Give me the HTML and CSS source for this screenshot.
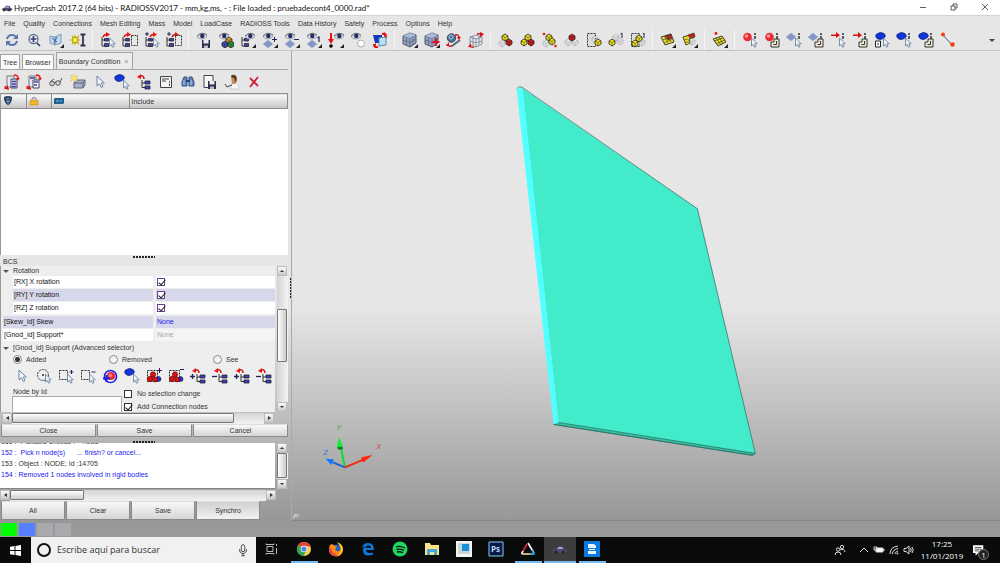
FILE: index.html
```html
<!DOCTYPE html>
<html lang="en">
<head>
<meta charset="UTF-8">
<title>HyperCrash 2017.2</title>
<meta name="viewport" content="width=device-width,initial-scale=1" />
<link rel="stylesheet" href="styles.css">
</head>
<body>

  <!-- shared icon parts -->
  <svg class="defs" width="0" height="0">
    <defs>
      <path id="cursor" d="M9.5 6v8l1.8-1.6 1.2 2.8 1.5-.7-1.2-2.7h2.4z" fill="#eef4fa" stroke="#6f86a3" stroke-width=".9"/>
      <path id="corner" d="M16 12v4h-4z" fill="#222"/>
      <g id="tree">
        <path d="M4 5v9h3M4 8h3" fill="none" stroke="#333"/>
        <path d="M6.500 6.500h4v2.500h-4zM6.500 11.500h4v3h-4z" fill="#4444b0" stroke="#222" stroke-width=".8"/>
      </g>
      <g id="redArrow">
        <path d="M4 5Q5 2 9 2.500" fill="none" stroke="#c11" stroke-width="1.400"/>
        <path d="M7 0l4 2.500-4 2.500z" fill="#e11"/>
      </g>
      <g id="eye">
        <path d="M1 5q5-6 10-1-1 3-5 3-3 0-5-2z" fill="#d9dde4" stroke="#7c8294" stroke-width=".6"/>
        <path d="M1 4q5-5 10-1" fill="none" stroke="#555" stroke-width=".8"/>
        <circle cx="6.300" cy="4" r="2.200" fill="#252c66"/>
      </g>
      <g id="floppy">
        <path d="M6 8h8v8H6z" fill="#2c2c48"/>
        <path d="M7.500 8h5v3.500h-5z" fill="#e8edf5"/>
        <path d="M8 13.500h4V16H8z" fill="#b8bcc8"/>
      </g>
      <path id="dashed" d="M8.500 4.500h6v10h-6z" fill="none" stroke="#333" stroke-dasharray="2 1"/>
      <path id="diamond" d="M5 6l5 4-5 4-5-4z" fill="#8494c4" stroke="#a5b2d4" stroke-width=".6"/>
      <g id="ball"><path d="M0 2l3-2 3 2v3L3 7 0 5z" stroke="#222" stroke-width=".8"/><path d="M0 2l3 1.500L6 2M3 3.500V7" fill="none" stroke="#222" stroke-width=".5"/></g>
      <g id="ghost"><path d="M0 2l3-2 3 2v3L3 7 0 5zM0 2l3 1.500L6 2M3 3.500V7" fill="#e6e6e6" stroke="#aaa" stroke-width=".7"/></g>
      <path id="info" d="M13 1v2M13 4v3" stroke="#222" stroke-width="1.400"/>
      <g id="pageBox">
        <path d="M10 7h5v8H7v-5h3z" fill="#eee8d0" stroke="#333"/>
        <path d="M12.500 9v3.500H9.500" fill="none" stroke="#333"/>
      </g>
      <path id="blueOval" d="M1 3.500Q5 0 9 2.500q2 1.500 1 3.500-4 4-8 1.500-2-1.500-1-4z" fill="#1235d8" stroke="#0a1a80" stroke-width=".7"/>
      <g id="cube">
        <path d="M1 4l7-3 6 2v8l-6 4-7-3z" fill="#8fa3c6" stroke="#556"/>
        <path d="M1 4l7 2 6-3M8 6v9M1 8l7 2.500L14 7M4.500 5v8.500M11 4.500v8.500" fill="none" stroke="#556" stroke-width=".6"/>
        <path d="M1 4l7-3 6 2-6 3z" fill="#a9bbd8"/>
      </g>
      <path id="spin" d="M10 2q4-1 4 4M6 15q-4 1-4-3" fill="none" stroke="#d11" stroke-width="2"/>
    </defs>

    <symbol id="refresh" viewBox="0 0 16 16"><path d="M3 7q1-4 5-4 3 0 4 2M13 9q-1 4-5 4-3 0-4-2" fill="none" stroke="#5577ac" stroke-width="2"/><path d="M14 2v5H9zM2 14V9h5z" fill="#5577ac"/></symbol>
    <symbol id="zoomAll" viewBox="0 0 16 16"><circle cx="7.500" cy="7" r="4.500" fill="#eef" stroke="#667088" stroke-width="1.300"/><path d="M7.500 4v6M4.500 7h6M11 11l3 3" stroke="#34406c" stroke-width="1.700"/></symbol>
    <symbol id="views" viewBox="0 0 16 16"><path d="M2 4l5 1v8l-5-2zM7 5l6-3v9l-6 2z" fill="#b9dcf2" stroke="#7899b8"/><path d="M4 6l5 4M9 5l-3 6" stroke="#558"/><use href="#corner"/></symbol>
    <symbol id="sunBeam" viewBox="0 0 16 16"><path d="M5 3v10M0 8h10M2 4l7 8M9 4l-7 8" stroke="#c6a800" stroke-width="1.200"/><circle cx="5" cy="8" r="2.700" fill="#fff45a" stroke="#b29700"/><path d="M10.500 2.500h5M10.500 13.500h5M13 2v12" stroke="#334" stroke-width="1.800"/></symbol>
    <symbol id="treePick" viewBox="0 0 16 16"><use href="#tree" x="-2"/><use href="#redArrow" x="-1"/><use href="#cursor"/></symbol>
    <symbol id="treeBox" viewBox="0 0 16 16"><use href="#tree" x="-3"/><use href="#redArrow" x="-2"/><use href="#dashed" x="1" y="-1"/></symbol>
    <symbol id="treePickAdd" viewBox="0 0 16 16"><use href="#tree" x="-2"/><use href="#redArrow" x="2"/><use href="#cursor"/><path d="M3 0v4M1 2h4" stroke="#225"/></symbol>
    <symbol id="treeBoxAdd" viewBox="0 0 16 16"><use href="#tree" x="-3"/><use href="#redArrow" x="2"/><use href="#dashed" x="1" y="-1"/><path d="M3 0v4M1 2h4" stroke="#225"/></symbol>
    <symbol id="eyeSave" viewBox="0 0 16 16"><use href="#eye"/><use href="#floppy"/></symbol>
    <symbol id="eyeBalls" viewBox="0 0 16 16"><use href="#eye"/><use href="#ball" x="8" y="5" fill="#e8a020"/><use href="#ball" x="4" y="9" fill="#3554c8"/><use href="#ball" x="10" y="9" fill="#2c9a3c"/></symbol>
    <symbol id="eyeTree" viewBox="0 0 16 16"><use href="#tree" x="-2"/><use href="#eye" x="4"/><use href="#corner"/></symbol>
    <symbol id="eyeAdd" viewBox="0 0 16 16"><use href="#diamond" x="1" y="2"/><use href="#eye"/><path d="M12.500 5v5M10 7.500h5" stroke="#225"/><use href="#corner"/></symbol>
    <symbol id="eyeRemove" viewBox="0 0 16 16"><use href="#diamond" x="1" y="2"/><use href="#eye"/><path d="M10 7.500h5" stroke="#225"/><use href="#corner"/></symbol>
    <symbol id="eyeOne" viewBox="0 0 16 16"><use href="#diamond" x="1" y="2"/><use href="#eye"/><path d="M11.500 6l1.500-1v5" fill="none" stroke="#225" stroke-width="1.200"/><use href="#corner"/></symbol>
    <symbol id="eyeDown" viewBox="0 0 16 16"><path d="M3 1v8" stroke="#e11" stroke-width="2"/><path d="M0 7h6l-3 5z" fill="#e11"/><circle cx="3" cy="14" r="1.800"/><use href="#eye" x="5"/><use href="#corner"/></symbol>
    <symbol id="eyeWhite" viewBox="0 0 16 16"><use href="#eye"/><circle cx="11" cy="11.500" r="3.500" fill="#fff" stroke="#aaa"/></symbol>
    <symbol id="swapView" viewBox="0 0 16 16"><use href="#spin"/><path d="M1 3h9v8H3z" fill="#1238c0"/><path d="M7 6l7-1v8l-7 1z" fill="#b4e0fa" stroke="#689"/><path d="M12 0l3 2.500L12 5zM4 11l-3 3 3 2z" fill="#e11"/></symbol>
    <symbol id="cubeView" viewBox="0 0 16 16"><use href="#cube"/><use href="#corner"/></symbol>
    <symbol id="cubeMove" viewBox="0 0 16 16"><use href="#cube"/><path d="M12 6v8M8.500 10h7" stroke="#d12" stroke-width="1.800"/><use href="#corner"/></symbol>
    <symbol id="sphereTurn" viewBox="0 0 16 16"><circle cx="5.500" cy="6" r="4.200" fill="#4a7396" stroke="#345"/><circle cx="5" cy="5" r="2" fill="none" stroke="#a8c8e0"/><path d="M6 14l8-6" stroke="#567" stroke-width="2"/><path d="M9 3q4-1 4 3M1 12q1 3 5 2" fill="none" stroke="#d11" stroke-width="1.400"/><path d="M11 5h4l-2 3zM3 10v4H0z" fill="#d11"/></symbol>
    <symbol id="wireCube" viewBox="0 0 16 16"><path d="M2 5l6-2 6 2v7l-6 3-6-2zM2 5l6 2 6-2M8 7v8M5 4v10M11 4v9M2 9l6 2 6-2" fill="none" stroke="#70809a" stroke-width=".8"/><path d="M9 2q5-1 5 2M1 14q3 2 5 1" fill="none" stroke="#d11" stroke-width="1.300"/><path d="M12 0l4 2-4 3zM3 11v4H0z" fill="#d11"/></symbol>
    <symbol id="cells1" viewBox="0 0 16 16"><use href="#ghost" x="1" y="8"/><use href="#ball" x="4" y="2" fill="#f4e518"/><use href="#ball" x="8" y="7" fill="#e01818"/></symbol>
    <symbol id="cells2" viewBox="0 0 16 16"><use href="#ball" x="1" y="7" fill="#f4e518"/><use href="#ball" x="5" y="2" fill="#f4e518"/><use href="#ball" x="8" y="7" fill="#e01818"/></symbol>
    <symbol id="cells3" viewBox="0 0 16 16"><use href="#ghost" x="1" y="8"/><use href="#ball" x="4" y="2" fill="#f4e518"/><use href="#ball" x="7" y="6" fill="#f4e518"/><circle cx="2" cy="2" r="1.300" fill="#e11"/><circle cx="13.500" cy="14" r="1.300" fill="#e11"/></symbol>
    <symbol id="cells4" viewBox="0 0 16 16"><use href="#ghost" x="1" y="7"/><use href="#ghost" x="8" y="7"/><use href="#ball" x="5" y="2" fill="#e01818"/></symbol>
    <symbol id="cells5" viewBox="0 0 16 16"><path d="M1.500 1.500h8v13h-8z" fill="#ddd" stroke="#333" stroke-dasharray="2 1"/><use href="#ghost" x="6" y="4"/><use href="#ball" x="9" y="7" fill="#f4e518"/></symbol>
    <symbol id="cells6" viewBox="0 0 16 16"><use href="#ghost" x="5" y="2"/><use href="#ghost" x="9" y="6"/><use href="#ball" x="1" y="7" fill="#f4e518"/><path d="M12.500 2l1.500-1v5" fill="none" stroke="#225"/></symbol>
    <symbol id="cells7" viewBox="0 0 16 16"><path d="M1.500 1.500h8v13h-8z" fill="#ddd" stroke="#333" stroke-dasharray="2 1"/><use href="#ghost" x="9" y="7"/><use href="#ball" x="6" y="3" fill="#f4e518"/><use href="#ball" x="2" y="8" fill="#f4e518"/><path d="M13 2l1-1v5" fill="none" stroke="#225"/></symbol>
    <symbol id="mesh1" viewBox="0 0 16 16"><path d="M1 5l10-3 3 8-9 3z" fill="#f0dc20" stroke="#443"/><path d="M5 4l6-2 1 4-4 2z" fill="#d81818" stroke="#443"/><path d="M2 8l10-3M4 11l9-4M4 4l4 7M7 3l4 7" stroke="#443" stroke-width=".6"/><use href="#corner"/></symbol>
    <symbol id="mesh2" viewBox="0 0 16 16"><use href="#ghost" x="7" y="6"/><path d="M1 5l10-3 2 3-6 2 1 4-4 2z" fill="#f0dc20" stroke="#443"/><path d="M2 8l4-1M3 11l4-2" stroke="#443" stroke-width=".6"/><path d="M6 3l6-2 1 3-5 2z" fill="#d81818" stroke="#443" stroke-width=".7"/><use href="#corner"/></symbol>
    <symbol id="mesh3" viewBox="0 0 16 16"><path d="M1 7l9-3 4 6-8 4z" fill="#f0e020" stroke="#443"/><path d="M2 9l9-3M4 12l9-4M4 6l5 7M7 5l4 7" stroke="#443" stroke-width=".8"/><circle cx="4" cy="1.500" r="1.400" fill="#e11"/><use href="#corner"/></symbol>
    <symbol id="nodePick" viewBox="0 0 16 16"><circle cx="5.500" cy="5" r="4.300" fill="#f02a35"/><circle cx="4.500" cy="4" r="1.700" fill="#ffa0a0"/><use href="#info"/><use href="#cursor"/></symbol>
    <symbol id="nodeBox" viewBox="0 0 16 16"><circle cx="5.500" cy="5" r="4.300" fill="#f02a35"/><circle cx="4.500" cy="4" r="1.700" fill="#ffa0a0"/><use href="#info"/><use href="#pageBox"/></symbol>
    <symbol id="elemPick" viewBox="0 0 16 16"><use href="#diamond" y="-5"/><use href="#info"/><use href="#cursor"/></symbol>
    <symbol id="elemBox" viewBox="0 0 16 16"><use href="#diamond" y="-5"/><use href="#info"/><use href="#pageBox"/></symbol>
    <symbol id="vecPick" viewBox="0 0 16 16"><path d="M1 2.500h5V0l4 3.200L6 6V4H1z" fill="#e01010"/><use href="#info"/><use href="#cursor"/></symbol>
    <symbol id="vecBox" viewBox="0 0 16 16"><path d="M1 2.500h5V0l4 3.200L6 6V4H1z" fill="#e01010"/><use href="#info"/><use href="#pageBox"/></symbol>
    <symbol id="partDoc" viewBox="0 0 16 16"><use href="#blueOval" x="1" y="-1"/><path d="M1.500 9h5v6h-5z" fill="#fff" stroke="#222"/><path d="M3 12h2" stroke="#222"/><use href="#cursor"/></symbol>
    <symbol id="partPick" viewBox="0 0 16 16"><use href="#blueOval" y="-1"/><use href="#info"/><use href="#cursor"/></symbol>
    <symbol id="partBox" viewBox="0 0 16 16"><use href="#blueOval" y="-1"/><use href="#info"/><use href="#pageBox"/></symbol>
    <symbol id="ruler" viewBox="0 0 16 16"><path d="M3 3l9 10" stroke="#557"/><circle cx="3" cy="2.500" r="2" fill="#f04010"/><circle cx="12.500" cy="12.500" r="2.200" fill="#f04010"/></symbol>

    <symbol id="copyIn" viewBox="0 0 16 16"><path d="M3 2h7v11H3z" fill="#e8e8f4" stroke="#777"/><path d="M7 5h6v9H7z" fill="#dde" stroke="#446"/><path d="M8 7.500h4M8 10h4M8 12.500h4" stroke="#4444a4" stroke-width="1.300"/><path d="M10 1q4 0 4 3M5 15q-4 0-4-3" fill="none" stroke="#e11" stroke-width="1.400"/><path d="M12 4h4l-2 2.500zM4 11v4H0z" fill="#d11"/></symbol>
    <symbol id="copyOut" viewBox="0 0 16 16"><path d="M3 2h7v11H3z" fill="#e8e8f4" stroke="#777"/><path d="M4 4h5" stroke="#4444a4" stroke-width="1.600"/><path d="M7 6h6v8H7z" fill="#f4f4fa" stroke="#446"/><path d="M8 8h4M8 11h3" stroke="#4444a4" stroke-width="1.300"/><path d="M10 1q4 0 4 3M5 15q-4 0-4-3" fill="none" stroke="#e11" stroke-width="1.400"/><path d="M12 4h4l-2 2.500zM4 11v4H0z" fill="#d11"/></symbol>
    <symbol id="glasses" viewBox="0 0 16 16"><circle cx="4" cy="9.500" r="2.300" fill="#cfd6dc" stroke="#555"/><circle cx="10" cy="9" r="2.300" fill="#cfd6dc" stroke="#555"/><path d="M6 9l2-1M2 8l4-3M12 8l2-4" stroke="#555" fill="none"/></symbol>
    <symbol id="newPart" viewBox="0 0 16 16"><path d="M4 9l3-3h8v5l-2 3H4z" fill="#a4afc8" stroke="#667"/><path d="M4 9h9v5M13 9l2-3" fill="none" stroke="#667"/><path d="M4 0v8M0 4h8M1 1l6 6M7 1L1 7" stroke="#eab93a"/><circle cx="4" cy="4" r="2" fill="#ffe860"/></symbol>
    <symbol id="pick" viewBox="0 0 16 16"><path d="M5 2v10l2.500-2.200 1.700 3.700 1.800-.9-1.700-3.600h3z" fill="#eef4fa" stroke="#6f86a3"/></symbol>
    <symbol id="partSel" viewBox="0 0 16 16"><use href="#blueOval" y="-1"/><use href="#cursor"/></symbol>
    <symbol id="treeOut" viewBox="0 0 16 16"><path d="M6 6v7.500h3M6 9h3" fill="none" stroke="#333"/><path d="M9 7h5v3H9zM9 12h5v3H9z" fill="#4040c8" stroke="#222" stroke-width=".8"/><path d="M8 5Q8 1 4 2" fill="none" stroke="#c11" stroke-width="1.500"/><path d="M5 0L1 3l4 2z" fill="#e11"/></symbol>
    <symbol id="sheet" viewBox="0 0 16 16"><path d="M2.500 2.500h11v11h-11z" fill="#f4f4f4" stroke="#444"/><path d="M4 5h7M4 7h4M11.500 7v1.500M11.500 9.500v2.500" stroke="#444"/></symbol>
    <symbol id="find" viewBox="0 0 16 16"><path d="M4 3h3v9H2V8zM9 3h3l2 5v4H9z" fill="#5a80b8" stroke="#3a5688"/><path d="M6 6h4v2H6z" fill="#24427c"/><path d="M4 6v5M11 6v5" stroke="#b8d0ec"/></symbol>
    <symbol id="saveAs" viewBox="0 0 16 16"><path d="M2 1.500h9v12H2z" fill="#f8f8f8" stroke="#444"/><use href="#floppy" y="-1"/></symbol>
    <symbol id="person" viewBox="0 0 16 16"><path d="M7 10l5-1 3 3v3H7z" fill="#f4f4f4" stroke="#bbb" stroke-width=".6"/><path d="M7 2q4-2 5 1 1 4-1 7H8z" fill="#c78a52"/><path d="M7 3q0-3 4-2 3 2 1 8l-2-5z" fill="#5c3a1c"/><path d="M1 10l2 3 5-2" fill="none" stroke="#444"/></symbol>
    <symbol id="del" viewBox="0 0 16 16"><path d="M4 4l8 8M12 3l-8 10" stroke="#cc2038" stroke-width="1.800"/></symbol>

    <symbol id="circlePick" viewBox="0 0 16 16"><circle cx="7" cy="7" r="5.500" fill="none" stroke="#333" stroke-dasharray="2 1"/><path d="M6 7h2M7 6v2" stroke="#333"/><use href="#cursor"/></symbol>
    <symbol id="boxAdd" viewBox="0 0 16 16"><path d="M1.500 2.500h8v9h-8z" fill="none" stroke="#333" stroke-dasharray="2 1"/><use href="#cursor"/><path d="M13.500 2v4M11.500 4h4" stroke="#225"/></symbol>
    <symbol id="boxRemove" viewBox="0 0 16 16"><path d="M1.500 2.500h8v9h-8z" fill="none" stroke="#333" stroke-dasharray="2 1"/><use href="#cursor"/><path d="M11.500 4h4" stroke="#225"/></symbol>
    <symbol id="ringAdd" viewBox="0 0 16 16"><circle cx="8.500" cy="8.500" r="6" fill="#fff" stroke="#1420e8" stroke-width="1.700"/><circle cx="9" cy="8" r="4" fill="#f02020"/><circle cx="8.500" cy="7.500" r="2" fill="#ff8080"/><path d="M4.500 7v7M1 10.500h7" stroke="#1420e8" stroke-width="1.800"/></symbol>
    <symbol id="partsAdd" viewBox="0 0 16 16"><path d="M1.500 2.500h10v11h-10z" fill="none" stroke="#222" stroke-dasharray="2 1"/><g stroke="#300" stroke-width=".5"><circle cx="7" cy="6.500" r="2.700" fill="#e01010"/><circle cx="12.500" cy="11" r="2.500" fill="#1a30d8"/><circle cx="4" cy="11" r="2.700" fill="#e01010"/><circle cx="9" cy="11.500" r="2.500" fill="#e01010"/></g><path d="M13.500 0v5M11 2.500h5" stroke="#225"/></symbol>
    <symbol id="partsRemove" viewBox="0 0 16 16"><path d="M1.500 2.500h10v11h-10z" fill="none" stroke="#222" stroke-dasharray="2 1"/><g stroke="#300" stroke-width=".5"><circle cx="7" cy="6.500" r="2.700" fill="#e01010"/><circle cx="12.500" cy="11" r="2.500" fill="#1a30d8"/><circle cx="4" cy="11" r="2.700" fill="#e01010"/><circle cx="9" cy="11.500" r="2.500" fill="#e01010"/></g><path d="M12 1.500h4" stroke="#225"/></symbol>
    <symbol id="treeAdd" viewBox="0 0 16 16"><use href="#treeOut" x="1"/><path d="M2.500 6v5M0 8.500h5" stroke="#225" stroke-width="1.300"/></symbol>
    <symbol id="treeRemove" viewBox="0 0 16 16"><use href="#treeOut" x="1"/><path d="M0 8.500h5" stroke="#225" stroke-width="1.300"/></symbol>
    <symbol id="car" viewBox="0 0 16 16"><path d="M1 9l3-1 3-3h4l2 3 2 1v2l-6 1-7-1z" fill="#4c4872"/><path d="M5 8l2-2h3l1 2z" fill="#a9a8cc"/><circle cx="4" cy="11" r="1.500" fill="#222"/><circle cx="11" cy="11" r="1.500" fill="#222"/></symbol>
  </svg>

  <header class="titlebar">
    <svg class="app-icon"><use href="#car"/></svg>
    <h1>HyperCrash 2017.2 (64 bits) - RADIOSSV2017 - mm,kg,ms, - : File loaded : pruebadecont4_0000.rad*</h1>
    <div class="window-buttons">
      <button aria-label="Minimize"><svg viewBox="0 0 8 8"><path d="M1 4.500h6"/></svg></button>
      <button aria-label="Restore"><svg viewBox="0 0 8 8"><path d="M1 3h4v4H1zM3 3V1h4v4H5"/></svg></button>
      <button aria-label="Close window"><svg viewBox="0 0 8 8"><path d="M1 1l6 6M7 1L1 7"/></svg></button>
    </div>
  </header>

  <div class="app">
    <nav class="menu">
      <button>File</button><button>Quality</button><button>Connections</button><button>Mesh Editing</button><button>Mass</button><button>Model</button><button>LoadCase</button><button>RADIOSS Tools</button><button>Data History</button><button>Safety</button><button>Process</button><button>Options</button><button>Help</button>
    </nav>

    <div class="toolbar">
      <div class="group">
        <button aria-label="Refresh"><svg><use href="#refresh"/></svg></button>
        <button aria-label="Fit view"><svg><use href="#zoomAll"/></svg></button>
        <button aria-label="Views"><svg><use href="#views"/></svg></button>
        <button aria-label="Light"><svg><use href="#sunBeam"/></svg></button>
      </div>
      <div class="group">
        <button aria-label="Pick in tree"><svg><use href="#treePick"/></svg></button>
        <button aria-label="Box in tree"><svg><use href="#treeBox"/></svg></button>
        <button aria-label="Add pick in tree"><svg><use href="#treePickAdd"/></svg></button>
        <button aria-label="Add box in tree"><svg><use href="#treeBoxAdd"/></svg></button>
      </div>
      <div class="group">
        <button aria-label="Save view"><svg><use href="#eyeSave"/></svg></button>
        <button aria-label="Show parts"><svg><use href="#eyeBalls"/></svg></button>
        <button aria-label="Show tree"><svg><use href="#eyeTree"/></svg></button>
        <button aria-label="Show more"><svg><use href="#eyeAdd"/></svg></button>
        <button aria-label="Show less"><svg><use href="#eyeRemove"/></svg></button>
        <button aria-label="Show one"><svg><use href="#eyeOne"/></svg></button>
        <button aria-label="Show loads"><svg><use href="#eyeDown"/></svg></button>
        <button aria-label="Show none"><svg><use href="#eyeWhite"/></svg></button>
        <button aria-label="Swap visible"><svg><use href="#swapView"/></svg></button>
      </div>
      <div class="group">
        <button aria-label="Shading"><svg><use href="#cubeView"/></svg></button>
        <button aria-label="Move"><svg><use href="#cubeMove"/></svg></button>
        <button aria-label="Rotate"><svg><use href="#sphereTurn"/></svg></button>
        <button aria-label="Wireframe"><svg><use href="#wireCube"/></svg></button>
      </div>
      <div class="group">
        <button aria-label="Cells 1"><svg><use href="#cells1"/></svg></button>
        <button aria-label="Cells 2"><svg><use href="#cells2"/></svg></button>
        <button aria-label="Cells 3"><svg><use href="#cells3"/></svg></button>
        <button aria-label="Cells 4"><svg><use href="#cells4"/></svg></button>
        <button aria-label="Cells 5"><svg><use href="#cells5"/></svg></button>
        <button aria-label="Cells 6"><svg><use href="#cells6"/></svg></button>
        <button aria-label="Cells 7"><svg><use href="#cells7"/></svg></button>
      </div>
      <div class="group">
        <button aria-label="Mesh 1"><svg><use href="#mesh1"/></svg></button>
        <button aria-label="Mesh 2"><svg><use href="#mesh2"/></svg></button>
      </div>
      <div class="group">
        <button aria-label="Mesh 3"><svg><use href="#mesh3"/></svg></button>
      </div>
      <div class="group">
        <button aria-label="Node info"><svg><use href="#nodePick"/></svg></button>
        <button aria-label="Node info by id"><svg><use href="#nodeBox"/></svg></button>
        <button aria-label="Element info"><svg><use href="#elemPick"/></svg></button>
        <button aria-label="Element info by id"><svg><use href="#elemBox"/></svg></button>
        <button aria-label="Load info"><svg><use href="#vecPick"/></svg></button>
        <button aria-label="Load info by id"><svg><use href="#vecBox"/></svg></button>
        <button aria-label="Part card"><svg><use href="#partDoc"/></svg></button>
        <button aria-label="Part info"><svg><use href="#partPick"/></svg></button>
        <button aria-label="Part info by id"><svg><use href="#partBox"/></svg></button>
        <button aria-label="Distance"><svg><use href="#ruler"/></svg></button>
      </div>
      <button class="more" aria-label="More tools"></button>
    </div>

    <main class="main">
      <section class="side">
        <div class="tabs">
          <button class="tab">Tree</button>
          <button class="tab">Browser</button>
          <button class="tab active">Boundary Condition <span>×</span></button>
        </div>

        <div class="side-tools">
          <button aria-label="Import"><svg><use href="#copyIn"/></svg></button>
          <button aria-label="Export"><svg><use href="#copyOut"/></svg></button>
          <button aria-label="See"><svg><use href="#glasses"/></svg></button>
          <button aria-label="New"><svg><use href="#newPart"/></svg></button>
          <button aria-label="Pick"><svg><use href="#pick"/></svg></button>
          <button aria-label="Pick part"><svg><use href="#partSel"/></svg></button>
          <button aria-label="From tree"><svg><use href="#treeOut"/></svg></button>
          <button aria-label="Info"><svg><use href="#sheet"/></svg></button>
          <button aria-label="Find"><svg><use href="#find"/></svg></button>
          <button aria-label="Save list"><svg><use href="#saveAs"/></svg></button>
          <button aria-label="User"><svg><use href="#person"/></svg></button>
          <button aria-label="Delete"><svg><use href="#del"/></svg></button>
        </div>

        <div class="list">
          <table>
            <tr>
              <th class="c-id"><svg viewBox="0 0 10 10"><path d="M1 1q4-2 8 0 0 6-4 8.500Q1 7 1 1z" fill="#243a58"/><path d="M3 3h1.500M6 3h1.500M3 5.500h4M5 1v8" stroke="#8fb4d0" stroke-width=".8"/></svg></th>
              <th class="c-lock"><svg viewBox="0 0 10 10"><path d="M3 5V3q2-3 4 0v2" fill="none" stroke="#999" stroke-width="1.300"/><path d="M1 4.500h8V9H1z" fill="#f3b62c" stroke="#c98a10" stroke-width=".6"/></svg></th>
              <th class="c-name"><svg viewBox="0 0 10 10"><path d="M0 3l1-1h9v5l-1 1H0z" fill="#1f618f"/><path d="M2 5h3M6 5h2" stroke="#8cc4e8"/></svg></th>
              <th>Include</th>
            </tr>
          </table>
        </div>

        <div class="splitter"></div>
        <div class="section-name">BCS</div>

        <div class="form-wrap">
          <form class="form">
            <div class="heading">Rotation</div>
            <div class="prop indent"><label for="rx">[RX] X rotation</label><span><input type="checkbox" id="rx" checked></span></div>
            <div class="prop indent odd"><label for="ry">[RY] Y rotation</label><span><input type="checkbox" id="ry" checked></span></div>
            <div class="prop indent last"><label for="rz">[RZ] Z rotation</label><span><input type="checkbox" id="rz" checked></span></div>
            <div class="prop odd"><label>[Skew_id] Skew</label><span class="link">None</span></div>
            <div class="prop last"><label>[Gnod_id] Support*</label><span class="off">None</span></div>
            <div class="heading">[Gnod_id] Support (Advanced selector)</div>
            <div class="radios">
              <label><input type="radio" name="mode" checked> Added</label>
              <label><input type="radio" name="mode"> Removed</label>
              <label><input type="radio" name="mode"> See</label>
            </div>
            <div class="selector">
              <button type="button" aria-label="Pick node"><svg><use href="#pick"/></svg></button>
              <button type="button" aria-label="Circle"><svg><use href="#circlePick"/></svg></button>
              <button type="button" aria-label="Add box"><svg><use href="#boxAdd"/></svg></button>
              <button type="button" aria-label="Remove box"><svg><use href="#boxRemove"/></svg></button>
              <button type="button" aria-label="Ring"><svg><use href="#ringAdd"/></svg></button>
              <button type="button" aria-label="By part"><svg><use href="#partSel"/></svg></button>
              <button type="button" aria-label="Add parts in box"><svg><use href="#partsAdd"/></svg></button>
              <button type="button" aria-label="Remove parts in box"><svg><use href="#partsRemove"/></svg></button>
              <button type="button" aria-label="Add from tree"><svg><use href="#treeAdd"/></svg></button>
              <button type="button" aria-label="Remove from tree"><svg><use href="#treeRemove"/></svg></button>
              <button type="button" aria-label="Add group"><svg><use href="#treeAdd"/></svg></button>
              <button type="button" aria-label="Remove group"><svg><use href="#treeRemove"/></svg></button>
            </div>
            <div class="by-id">
              <div class="node-id">
                <label for="node">Node by Id</label>
                <input type="text" id="node">
              </div>
              <div class="checks">
                <label><input type="checkbox"> No selection change</label>
                <label><input type="checkbox" checked> Add Connection nodes</label>
              </div>
            </div>
          </form>
          <div class="vscroll"><button class="up" aria-label="Up"></button><div class="track"><div class="thumb form-thumb"></div></div><button class="down" aria-label="Down"></button></div>
        </div>
        <div class="hscroll form-hscroll"><button class="left" aria-label="Left"></button><div class="track"><div class="thumb"></div></div><button class="right" aria-label="Right"></button></div>
        <div class="actions">
          <button>Close</button><button>Save</button><button>Cancel</button>
        </div>

        <div class="splitter"></div>
        <div class="log-wrap">
          <div class="log">
            <p>151 :  Pickable entities :    node</p>
            <p class="blue">152 :  Pick n node(s)      ... finish? or cancel...</p>
            <p>153 : Object : NODE; Id :14705</p>
            <p class="blue">154 : Removed 1 nodes involved in rigid bodies</p>
          </div>
          <div class="vscroll"><button class="up" aria-label="Log up"></button><div class="track"><div class="thumb log-thumb"></div></div><button class="down" aria-label="Log down"></button></div>
        </div>
        <div class="hscroll log-hscroll"><button class="left" aria-label="Log left"></button><div class="track"><div class="thumb"></div></div><button class="right" aria-label="Log right"></button></div>
        <div class="log-buttons">
          <button>All</button><button>Clear</button><button>Save</button><button class="pressed">Synchro</button>
        </div>
      </section>

      <div class="grip"></div>

      <section class="viewport">
        <svg viewBox="0 0 709 470" preserveAspectRatio="xMinYMax meet">
          <!-- plate -->
          <path d="M262 374l5-3 197 32-3 2z" fill="#2fc3a4" stroke="#3c8b7c"/>
          <path d="M229 36l177 122 58 245-197-31z" fill="#42ebc9"/>
          <path d="M225 39l4-3 2 1 36 335-5 2z" fill="#54ffff"/>
          <path d="M225 38l2-2h3l176 122 58 245-197-31M262 374l200 31" fill="none" stroke="#33685f" stroke-width=".7"/>

          <!-- axes -->
          <g stroke-width="2">
            <path d="M53 417l-4-20" stroke="#0be02d"/>
            <path d="M47.300 386.500l-2.500 11 6-1z" fill="#07f02e"/>
            <path d="M45 397l5.500-1v3h-4z" fill="#067a1c"/>
            <path d="M53 417l-12-5" stroke="#1c62d8"/>
            <path d="M33.500 408l8.500 1-2.500 5.500z" fill="#0878ff"/>
            <path d="M53 417l18-7.500" stroke="#f02a0c"/>
            <path d="M80.500 404.500l-11.500 2.500 2.500 5z" fill="#ff2404"/>
          </g>
          <g class="axis-names">
            <text x="44" y="380" fill="#3fae48">Y</text>
            <text x="84" y="399" fill="#c85048">X</text>
            <text x="31" y="405" fill="#3a78d8">Z</text>
            <text x="1" y="469" fill="#e8e8e8">P</text>
          </g>
        </svg>
      </section>
    </main>

    <footer class="status"><i class="green"></i><i class="blue"></i><i></i><i></i></footer>
  </div>

  <div class="taskbar">
    <button class="start" aria-label="Start"><svg viewBox="0 0 12 12"><path d="M0 2l5-1v4.500H0zM6 1l6-1v5.500H6zM0 6.500h5V11l-5-1zM6 6.500h6V12l-6-1z" fill="#fff"/></svg></button>
    <label class="search">
      <svg class="cortana" viewBox="0 0 16 16"><circle cx="8" cy="8" r="6" fill="none" stroke="#111" stroke-width="2"/></svg>
      <input type="text" placeholder="Escribe aquí para buscar">
      <svg class="mic" viewBox="0 0 16 16"><rect x="6" y="2" width="4" height="8" rx="2" fill="none" stroke="#333"/><path d="M4 7q0 5 4 5t4-5M8 12v2M6 14.500h4" fill="none" stroke="#333"/></svg>
    </label>
    <div class="tasks">
      <button aria-label="Task view"><svg viewBox="0 0 16 16" fill="none" stroke="#bbb"><path d="M3 5.500h6v5H3zM2 2.500v1h8v-1M2 13.500v-1h8v1M12.500 3v2M12.500 7v6"/></svg></button>
      <button class="open" aria-label="Chrome"><svg viewBox="0 0 16 16"><circle cx="8" cy="8" r="7" fill="#fbd044"/><path d="M8 8L2 4.400A7 7 0 0 1 14.500 5.500H8z" fill="#e2483a"/><path d="M2 4.400A7 7 0 0 0 7.500 15L10.500 9.500 8 8z" fill="#2da65a"/><circle cx="8" cy="8" r="3.300" fill="#fff"/><circle cx="8" cy="8" r="2.600" fill="#4a86ea"/></svg></button>
      <button aria-label="Firefox"><svg viewBox="0 0 16 16"><circle cx="8.500" cy="8.500" r="5" fill="#2460c8"/><path d="M2 4l2-1 3 2 2 1-2 2q1 3 4 2 2-1 1-4l-2-4q5 2 5 6.500A7 6.800 0 0 1 1 9q0-3 1-5z" fill="#ff8a14"/><path d="M9 1q6 2 6 8-2 5-6 6 5-4 4-8-1-3-4-6z" fill="#ffd028"/><path d="M1 8q0 6 6 7l3-1Q4 14 3 7z" fill="#f0394c"/></svg></button>
      <button aria-label="Edge"><svg viewBox="0 0 16 16"><path d="M2 7q1-5 6-5 6 0 6 7H6q0 4 7 2.500v2Q3 17 3 9q0-3 4-4Q4 5 2 7zM6 7h5q0-2.500-2.500-2.500T6 7z" fill="#0a78d8" fill-rule="evenodd"/></svg></button>
      <button aria-label="Spotify"><svg viewBox="0 0 16 16"><circle cx="8" cy="8" r="7.500" fill="#1ed760"/><path d="M4 6q4-1.500 9 1M4.500 8.500q4-1 7.500 1M5 11q3-.8 6 .8" fill="none" stroke="#111" stroke-width="1.300"/></svg></button>
      <button aria-label="Explorer"><svg viewBox="0 0 16 16"><path d="M1 2h5l1 2h8v10H1z" fill="#fbe08a"/><path d="M3 8h10v6h-3v-3H6v3H3z" fill="#45a8dc"/></svg></button>
      <button aria-label="Viewer"><svg viewBox="0 0 16 16"><path d="M0 0h16v16H0z" fill="#f4f4f4"/><path d="M2 2h12v11H2z" fill="#c9d6da"/><path d="M6 3h7v7H6z" fill="#1492dc"/></svg></button>
      <button aria-label="Photoshop"><svg viewBox="0 0 16 16"><path d="M1 1h14v14H1z" fill="#061a48" stroke="#8cc6f4"/><text x="3" y="11" class="ps">Ps</text></svg></button>
      <button class="open" aria-label="Solver"><svg viewBox="0 0 16 16" fill="none" stroke-width="1.600"><path d="M7 3L2 12" stroke="#e0204c"/><path d="M8 2l6 10" stroke="#fff"/><path d="M2 13h12" stroke="#f2dc8c"/><path d="M12 9l2 4h-4" stroke="#18a0d8"/><path d="M1.500 13l1.500-3" stroke="#fff"/></svg></button>
      <button class="open current" aria-label="HyperCrash"><svg><use href="#car"/></svg></button>
      <button class="open" aria-label="Editor"><svg viewBox="0 0 16 16"><path d="M0 0h16v16H0z" fill="#0a7ae0"/><path d="M4 3h6l2 2v8H4z" fill="#e8f4ff"/><path d="M3 7h10v3H3z" fill="#0a7ae0"/><path d="M5 8.500h6" stroke="#fff"/></svg></button>
    </div>
    <div class="tray">
      <svg viewBox="0 0 12 12"><circle cx="4" cy="5.500" r="1.700"/><circle cx="8" cy="3" r="1.700"/><path d="M1 11q0-3 3-3t3 3M6 6q4-2 5 2"/></svg>
      <svg class="chev" viewBox="0 0 12 12"><path d="M2 8l4-4 4 4"/></svg>
      <svg viewBox="0 0 12 12"><path d="M3 4h7v4H3z" fill="#fff"/><path d="M1 3h3v3H1zM11 5v2"/></svg>
      <svg viewBox="0 0 12 12"><path d="M2 10q0-7 8-8M4.500 10q0-4.500 5.500-5.500M7 10q0-2 3-3"/><circle cx="9.500" cy="9.500" r=".6"/></svg>
      <svg viewBox="0 0 12 12"><path d="M1 4.500h2L6 2v8L3 7.500H1zM7.500 4q1.500 2 0 4M9 3q2.500 3 0 6"/></svg>
    </div>
    <div class="clock"><time>17:25</time><span>11/01/2019</span></div>
    <button class="notify" aria-label="Notifications"><svg viewBox="0 0 14 12"><path d="M0 0h12v9H6l-3 3V9H0z" fill="#fff"/><path d="M2 2.500h8M2 4.500h8M2 6.500h5" stroke="#111" stroke-width=".8"/></svg><span>1</span></button>
  </div>

</body>
</html>
```
FILE: styles.css
```css
* {
  box-sizing: border-box;
}
body {
  margin: 0;
  min-height: 100vh;
  display: flex;
  flex-direction: column;
  font-family: "Liberation Sans", Arial, sans-serif;
  font-size: 7px;
  line-height: 9px;
  color: #333;
}
button, input {
  font: inherit;
  color: inherit;
  margin: 0;
  padding: 0;
  border: 0;
  background: none;
}
.defs {
  position: absolute;
}

/* title bar */
.titlebar {
  display: flex;
  align-items: center;
  height: 15px;
  padding-left: 1px;
  background: #fff;
}
.titlebar h1 {
  flex: 1;
  margin: 0;
  font: 8px/14px Lato, "Open Sans", sans-serif;
  color: #111;
}
.app-icon {
  width: 12px;
  height: 12px;
  margin-right: 1px;
}
.window-buttons {
  display: flex;
}
.window-buttons button {
  width: 31px;
  height: 14px;
}
.window-buttons svg {
  width: 8px;
  height: 8px;
  fill: none;
  stroke: #333;
  stroke-width: .8;
}

.app {
  flex: 1;
  display: flex;
  flex-direction: column;
  border-top: 1px solid #cfd4d4;
  background: linear-gradient(#e6e6e6 56%, #979797 97%, #9b9b9b);
}
.menu {
  display: flex;
  gap: 8px;
  height: 14px;
  padding-left: 4px;
}

/* toolbars */
.toolbar {
  display: flex;
  align-items: center;
  height: 21px;
  padding-left: 1px;
  border-bottom: 1px solid #c4c4c4;
}
.group {
  display: flex;
}
.group + .group {
  margin-left: 3px;
  padding-left: 4px;
  border-left: 1px solid #f6f6f6;
}
.toolbar button, .side-tools button, .selector button {
  width: 22px;
  height: 20px;
  flex: none;
}
.toolbar svg, .side-tools svg, .selector svg {
  display: block;
  width: 16px;
  height: 16px;
  margin: 0 auto;
}
.toolbar .more {
  width: 16px;
  margin-left: auto;
}
.more::after {
  content: "";
  display: block;
  width: 0;
  margin: 0 auto;
  border: 3px solid transparent;
  border-top-color: #444;
  border-bottom: 0;
}

/* left side */
.main {
  flex: 1;
  display: flex;
}
.side {
  flex: 0 0 287px;
  display: flex;
  flex-direction: column;
}
.tabs {
  display: flex;
  align-items: flex-end;
  gap: 2px;
  height: 19px;
  border-bottom: 1px solid #a4a8aa;
}
.tab {
  height: 15px;
  padding: 0 2px;
  border: 1px solid #9aa5a5;
  border-bottom: 0;
  border-radius: 1px;
  background: #fafafa;
}
.tab.active {
  height: 17px;
  padding: 0 4px 0 2px;
  background: #ececec;
}
.tab span {
  margin-left: 2px;
  color: #888;
}
.side-tools {
  display: flex;
  align-items: center;
  height: 23px;
  padding-left: 1px;
}
.list {
  flex: 1;
  background: #fff;
  border-left: 1px solid #999;
}
.list table {
  width: 100%;
  table-layout: fixed;
  border-collapse: collapse;
}
.list th {
  height: 15px;
  padding: 0 0 0 2px;
  text-align: left;
  font-weight: normal;
  border: 1px solid #8c8c8c;
  border-left: 0;
  background: linear-gradient(#fafafa, #dcdada 60%, #c8c4c4);
}
.list svg {
  display: block;
  width: 10px;
  height: 10px;
}
.c-id {
  width: 25px;
}
.c-lock {
  width: 25px;
}
.c-name {
  width: 78px;
}
.splitter {
  height: 2px;
  width: 22px;
  margin: 1px auto 0;
  background: repeating-linear-gradient(90deg, #222 0 2px, transparent 2px 3px);
}
.section-name {
  height: 8px;
  padding-left: 3px;
  line-height: 7px;
}

.form-wrap {
  display: flex;
  height: 146px;
  gap: 2px;
  overflow: hidden;
}
.form {
  flex: 1;
  min-width: 0;
  padding-left: 2px;
  overflow: hidden;
  background: #eee;
  border-left: 1px solid #999;
}
.heading {
  position: relative;
  padding-left: 10px;
  height: 10px;
  line-height: 10px;
}
.heading::before {
  content: "";
  position: absolute;
  left: 0;
  top: 4px;
  border: 3px solid transparent;
  border-top-color: #555;
  border-bottom: 0;
}
.prop {
  display: grid;
  grid-template-columns: 150px 1fr;
  gap: 3px;
  height: 12px;
  margin-bottom: 1px;
  line-height: 12px;
}
.prop.indent {
  padding-left: 10px;
  grid-template-columns: 140px 1fr;
}
.prop.last {
  margin-bottom: 2px;
}
.prop label, .prop span {
  display: flex;
  align-items: center;
  padding-left: 1px;
  background: #fff;
  color: #111;
}
.prop.odd label, .prop.odd span {
  background: #d7d7ea;
}
.prop .link {
  color: #2222ee;
}
.prop .off {
  background: #f4f4f4;
  color: #aaa;
}
input[type=checkbox] {
  appearance: none;
  flex: none;
  width: 8px;
  height: 8px;
  border: 1px solid #333;
  background: #fff;
}
.prop input[type=checkbox] {
  border-color: #6a3f96;
}
input[type=checkbox]:checked::after {
  content: "";
  display: block;
  width: 3px;
  height: 6px;
  margin: -1px 0 0 2px;
  border: solid #222;
  border-width: 0 1px 1px 0;
  transform: rotate(40deg);
}
.radios {
  display: grid;
  grid-template-columns: 96px 104px 1fr;
  align-items: center;
  height: 12px;
  padding-left: 10px;
}
.radios label, .checks label {
  display: flex;
  align-items: center;
  gap: 4px;
}
input[type=radio] {
  appearance: none;
  width: 9px;
  height: 9px;
  border: 1px solid #888;
  border-radius: 50%;
  background: #f4f4f4;
}
input[type=radio]:checked {
  background: radial-gradient(#333 2px, #f4f4f4 3px);
}
.selector {
  display: flex;
  align-items: center;
  height: 22px;
  padding-left: 8px;
}
.by-id {
  display: flex;
  gap: 2px;
  padding-left: 9px;
}
.node-id {
  width: 110px;
}
.node-id label {
  display: block;
  height: 9px;
  padding-left: 1px;
}
.node-id input {
  display: block;
  width: 110px;
  height: 18px;
  border: 1px solid #aaa;
  background: #fff;
}
.checks label {
  height: 13px;
  gap: 5px;
}

/* scroll bars */
.vscroll {
  width: 11px;
  display: flex;
  flex-direction: column;
}
.hscroll {
  display: flex;
  height: 11px;
}
.vscroll button, .hscroll button {
  flex: none;
  width: 10px;
  height: 10px;
  background: linear-gradient(#fafafa, #c8c8c8);
  border: 1px solid #bbb;
}
.vscroll button::after, .hscroll button::after {
  content: "";
  display: block;
  width: 0;
  margin: 0 auto;
  border: 2px solid transparent;
}
.up::after {
  border-bottom-color: #333 !important;
  border-top: 0 !important;
}
.down::after {
  border-top-color: #333 !important;
  border-bottom: 0 !important;
}
.left::after {
  border-right: 3px solid #333 !important;
  border-left: 0 !important;
}
.right::after {
  border-left: 3px solid #333 !important;
  border-right: 0 !important;
}
.track {
  flex: 1;
  background: linear-gradient(90deg, #d4d4d4, #f2f2f2);
}
.hscroll .track {
  background: linear-gradient(#d4d4d4, #f2f2f2);
}
.thumb {
  height: 10px;
  border: 1px solid #777;
  border-radius: 1px;
  background: linear-gradient(#fff, #ccc);
}
.vscroll .thumb {
  width: 10px;
  background: linear-gradient(90deg, #fff, #ccc);
}
.vscroll .form-thumb {
  height: 53px;
  margin-top: 33px;
}
.vscroll .log-thumb {
  height: 25px;
}
.form-hscroll {
  width: 274px;
  margin-top: 1px;
  padding-left: 2px;
}
.form-hscroll .thumb {
  width: 88%;
}
.log-hscroll {
  width: 276px;
  margin-top: 1px;
}
.log-hscroll .thumb {
  width: 74px;
}

.actions, .log-buttons {
  display: flex;
  gap: 1px;
  padding-left: 1px;
}
.actions {
  height: 13px;
  margin-bottom: 3px;
}
.actions button {
  flex: 1;
}
.actions button, .log-buttons button {
  border: 1px solid #8a8a8a;
  border-top-color: #ddd;
  background: linear-gradient(#f8f8f8, #d6d6d6);
}
.log-wrap {
  display: flex;
  gap: 2px;
  height: 46px;
}
.log {
  flex: 1;
  display: flex;
  flex-direction: column;
  justify-content: flex-end;
  padding-bottom: 8px;
  overflow: hidden;
  background: #fff;
  border-bottom: 1px solid #888;
}
.log p {
  flex: none;
  margin: 0;
  padding-left: 1px;
  line-height: 11px;
  white-space: pre;
}
.log .blue {
  color: #2222ee;
}
.log-buttons {
  height: 19px;
  width: 260px;
  margin-bottom: 1px;
}
.log-buttons button {
  flex: 1;
}
.log-buttons .pressed {
  background: linear-gradient(#d0d0d0, #f2f2f2);
}
.grip {
  flex: 0 0 4px;
  border-right: 1px solid #aaa;
  background: repeating-linear-gradient(#222 0 2px, transparent 2px 3px) 2px 227px / 2px 21px no-repeat;
}

/* 3d view */
.viewport {
  flex: 1;
  min-width: 0;
  display: flex;
  border-bottom: 1px solid #868686;
}
.viewport svg {
  width: 100%;
  height: auto;
}
.axis-names {
  font-size: 8px;
  font-style: italic;
}
.status {
  display: flex;
  gap: 2px;
  height: 16px;
  padding: 2px 0 1px 1px;
}
.status i {
  width: 16px;
  background: #a9a9ad;
}
.status .green {
  background: #0f0;
}
.status .blue {
  background: #5580ff;
}

/* windows task bar */
.taskbar {
  display: flex;
  align-items: stretch;
  height: 26px;
  background: #0a0b0b;
  color: #fff;
  font: 8px/12px "Open Sans", "Noto Sans", sans-serif;
}
.start {
  width: 31px;
}
.start svg {
  display: block;
  width: 11px;
  height: 11px;
  margin: 0 auto;
}
.search {
  display: flex;
  align-items: center;
  width: 225px;
  padding: 0 6px 0 5px;
  background: #f1f1f1;
}
.search input {
  flex: 1;
  min-width: 0;
  padding-left: 5px;
  font-size: 9px;
}
.search input::placeholder {
  color: #333;
  opacity: 1;
}
.search svg {
  width: 16px;
  height: 16px;
}
.search .mic {
  width: 14px;
  height: 14px;
}
.tasks {
  display: flex;
  flex: 1;
}
.tasks button {
  width: 32px;
  padding: 0 8px;
  border-bottom: 2px solid transparent;
}
.tasks svg {
  display: block;
  width: 16px;
  height: 16px;
}
.tasks .open {
  background: linear-gradient(#76b9ed, #76b9ed) 50% 100% / 27px 2px no-repeat;
  background-origin: border-box;
  background-clip: border-box;
}
.tasks .current {
  background: linear-gradient(#3d3d3d 24px, #76b9ed 24px);
  background-origin: border-box;
}
.ps {
  font: bold 8px "Open Sans", sans-serif;
  fill: #b4dcfa;
}
.tray {
  display: flex;
  align-items: center;
  gap: 3px;
}
.tray svg {
  width: 12px;
  height: 12px;
  fill: none;
  stroke: #ddd;
}
.tray .chev {
  margin-left: 9px;
}
.clock {
  display: flex;
  flex-direction: column;
  align-items: center;
  justify-content: center;
  width: 54px;
}
.notify {
  position: relative;
  width: 31px;
}
.notify svg {
  display: block;
  width: 12px;
  height: 11px;
  margin-left: 4px;
}
.notify span {
  position: absolute;
  left: 9px;
  top: 12px;
  width: 11px;
  height: 11px;
  border: 1px solid #777;
  border-radius: 50%;
  background: #222;
  line-height: 9px;
}
```
